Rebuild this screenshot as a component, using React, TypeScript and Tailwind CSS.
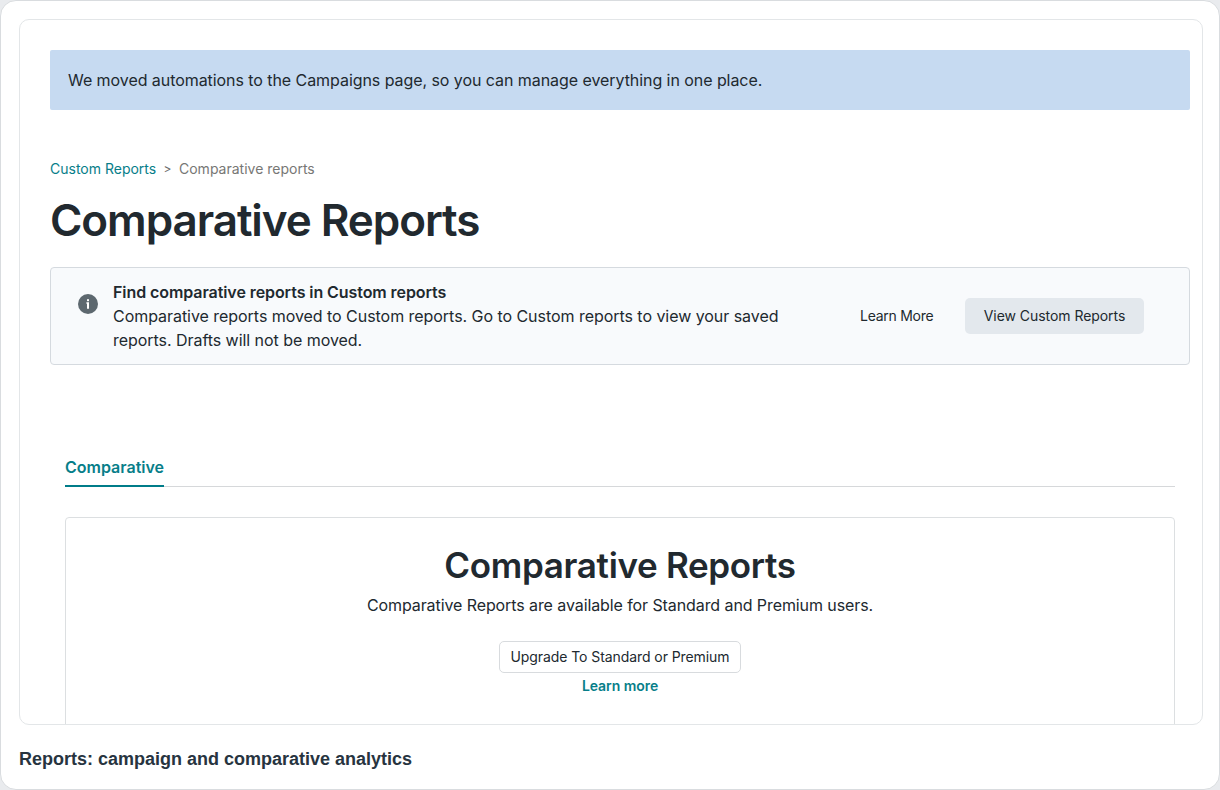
function InfoIcon() {
  return (
    <svg width="20" height="20" viewBox="0 0 20 20" className="block shrink-0" aria-hidden="true">
      <circle cx="10" cy="10" r="10" fill="#5d686f" />
      <rect x="9" y="5.2" width="2" height="2" fill="#fff" />
      <path d="M8.4 8.3H11v6.4H9V9.7h-.6z" fill="#fff" />
    </svg>
  );
}

function Banner() {
  return (
    <div className="flex h-[60px] items-center rounded-[2px] bg-[#c6daf1] px-[18px]">
      <p className="text-base leading-6 tracking-[-0.062px] whitespace-nowrap">
        We moved automations to the Campaigns page, so you can manage everything in one place.
      </p>
    </div>
  );
}

function Breadcrumb() {
  return (
    <nav className="mt-[49px] flex h-5 items-center text-sm leading-5 whitespace-nowrap">
      <a className="w-[106px] text-[#077e89]">Custom Reports</a>
      <span className="w-[23px] text-center text-xs text-[#6b6b6b]">&gt;</span>
      <span className="text-[#777775]">Comparative reports</span>
    </nav>
  );
}

function Notice() {
  return (
    <section className="mt-[18px] flex h-[98px] rounded-[4px] border border-[#d5dadf] bg-[#f8fafc]">
      <div className="pt-[26px] pl-[27px]">
        <InfoIcon />
      </div>
      <div className="w-[737px] pt-[12px] pl-[15px] text-base leading-6 whitespace-nowrap">
        <p className="font-semibold tracking-[-0.075px]">Find comparative reports in Custom reports</p>
        <p className="tracking-[-0.045px]">
          Comparative reports moved to Custom reports. Go to Custom reports to view your saved
          <br />
          reports. Drafts will not be moved.
        </p>
      </div>
      <div className="flex items-center pl-[25px] text-sm whitespace-nowrap">
        <button className="w-[74px] text-left tracking-[-0.26px]">Learn More</button>
        <button className="ml-[31px] h-9 w-[179px] rounded-[5px] bg-[#e3e8ed] tracking-[-0.05px]">View Custom Reports</button>
      </div>
    </section>
  );
}

export default function App() {
  return (
    <div className="h-[790px] w-[1220px] bg-[#e9ebee] font-['Inter',sans-serif]">
      <main className="flex h-[790px] flex-col rounded-[16px] border border-[#d9dcdf] bg-white px-[18px] pt-[18px] text-[#21292f]">
        <div className="h-[706px] w-[1184px] overflow-hidden rounded-[10px] border border-[#e3e6e8] pt-[30px] pr-[12px] pl-[30px]">
          <Banner />
          <Breadcrumb />
          <h1 className="mt-[12px] h-[58px] text-[44px] leading-[58px] font-semibold tracking-[-1.06px] whitespace-nowrap">Comparative Reports</h1>
          <Notice />
          <div className="mx-[15px] mt-[90px] flex h-8 border-b border-[#d6d8da]">
            <div className="h-8 w-[99px] border-b-2 border-[#007c89] text-base leading-6 font-semibold whitespace-nowrap text-[#077e89]">
              Comparative
            </div>
          </div>
          <section className="mx-[15px] mt-[30px] flex h-[260px] flex-col items-center rounded-[4px] border border-[#dcdfe1] pt-[23px]">
            <h2 className="text-[35px] leading-[48px] font-semibold tracking-[-0.33px] whitespace-nowrap">Comparative Reports</h2>
            <p className="mt-[4px] text-base leading-6 tracking-[-0.09px] whitespace-nowrap">
              Comparative Reports are available for Standard and Premium users.
            </p>
            <button className="mt-[24px] h-8 w-[242px] rounded-[5px] border border-[#d8dbde] text-sm tracking-[-0.08px] whitespace-nowrap">
              Upgrade To Standard or Premium
            </button>
            <a className="mt-[3px] text-sm leading-5 font-semibold tracking-[-0.06px] whitespace-nowrap text-[#077e89]">Learn more</a>
          </section>
        </div>
        <p className="mt-[21px] font-['Liberation_Sans',Arial,sans-serif] text-lg leading-[26px] font-bold text-[#27343f]">
          Reports: campaign and comparative analytics
        </p>
      </main>
    </div>
  );
}
